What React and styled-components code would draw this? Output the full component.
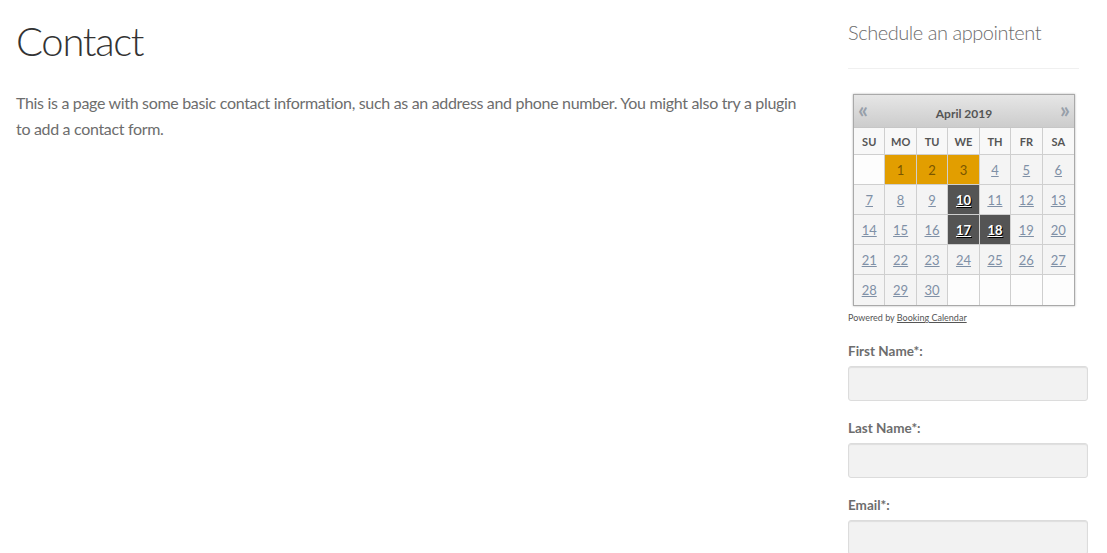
import React from "react";
import styled, { createGlobalStyle } from "styled-components";

const GlobalStyle = createGlobalStyle`
  html, body { margin: 0; padding: 0; background: #ffffff; }
  body { font-family: Lato, "Open Sans", sans-serif; color: #6d6d6d; }
  * { box-sizing: border-box; }
`;

const Page = styled.div`
  display: flex;
  align-items: flex-start;
  padding: 0 19px 0 16px;
  gap: 48px;
`;

const Main = styled.main`
  flex: 0 0 784px;
`;

const Title = styled.h1`
  margin: 17px 0 0;
  font-family: Lato, sans-serif;
  font-weight: 300;
  font-size: 40px;
  letter-spacing: -1.3px;
  line-height: 1.2;
  color: #333333;
`;

const Lead = styled.p`
  margin: 25px 0 0;
  font-size: 16px;
  letter-spacing: -0.32px;
  line-height: 26px;
  color: #6d6d6d;
`;

const Sidebar = styled.aside`
  flex: 0 0 240px;
`;

const WidgetTitle = styled.h3`
  margin: 20px 0 0;
  padding-bottom: 24px;
  border-bottom: 1px solid rgba(0, 0, 0, 0.06);
  font-weight: 300;
  font-size: 20px;
  letter-spacing: -0.45px;
  line-height: 1.2;
  color: #6d6d6d;
  width: 231px;
`;

const Calendar = styled.div`
  margin: 25px 0 0 5px;
  width: 222px;
  border: 1px solid #a9a9a9;
  box-shadow: 0 0 2px #b5b5b5;
  background: #fff;
`;

const CalHeader = styled.div`
  height: 33px;
  display: flex;
  align-items: center;
  justify-content: space-between;
  padding: 0 4px 0 4px;
  background: linear-gradient(#e6e6e6, #cccccc);
  border-bottom: 1px solid #c6c6c6;
`;

const Arrow = styled.span`
  font-size: 22px;
  font-weight: 700;
  line-height: 1;
  color: #97a0aa;
  margin-top: -2px;
`;

const Month = styled.span`
  font-size: 12px;
  font-weight: 700;
  color: #555;
  margin-top: 4px;
`;

const Grid = styled.div`
  display: grid;
  grid-template-columns: repeat(7, 1fr);
`;

const DayName = styled.div`
  height: 27px;
  display: flex;
  align-items: center;
  justify-content: center;
  font-size: 11px;
  font-weight: 700;
  color: #555;
  background: #f8f8f8;
  border-right: 1px solid #cfcfcf;
  border-bottom: 1px solid #cfcfcf;
  &:nth-child(7n) { border-right: none; }
`;

const cellBg = {
  empty: "#fdfdfd",
  normal: "#f4f4f4",
  booked: "#e29e00",
  dark: "#545454",
};

const Cell = styled.div`
  height: 30px;
  display: flex;
  align-items: center;
  justify-content: center;
  font-size: 13px;
  background: ${(p) => cellBg[p.$kind]};
  border-right: 1px solid #cfcfcf;
  border-bottom: 1px solid #cfcfcf;
  &:nth-child(7n) { border-right: none; }
  &:nth-last-child(-n + 7) { border-bottom: none; }
`;

const DayLink = styled.a`
  color: ${(p) => (p.$kind === "dark" ? "#ffffff" : "#7f90a6")};
  text-decoration: underline;
  font-weight: ${(p) => (p.$kind === "dark" ? 700 : 400)};
  text-shadow: ${(p) => (p.$kind === "dark" ? "1px 1px 0 #000" : "none")};
  cursor: pointer;
`;

const BookedNum = styled.span`
  color: #7a5600;
`;

const Powered = styled.div`
  margin-top: 6px;
  font-size: 9px;
  line-height: 12px;
  color: #555;
  a { color: #555; text-decoration: underline; }
`;

const Field = styled.div`
  margin-top: 17px;
  & + & { margin-top: 17px; }
`;

const Label = styled.label`
  display: block;
  font-size: 13.5px;
  font-weight: 700;
  line-height: 20px;
  color: #6d6d6d;
  margin-bottom: 5px;
`;

const Input = styled.input`
  display: block;
  width: 240px;
  height: 35px;
  background: #f2f2f2;
  border: 1px solid #dcdcdc;
  border-radius: 3px;
  box-shadow: inset 0 1px 1px rgba(0, 0, 0, 0.08);
  outline: none;
`;

const days = [];
const booked = [1, 2, 3];
const dark = [10, 17, 18];
for (let i = 0; i < 35; i++) {
  const d = i; // SU first cell empty (April 1, 2019 is Monday)
  if (d < 1 || d > 30) days.push({ d: null, kind: "empty" });
  else if (booked.includes(d)) days.push({ d, kind: "booked" });
  else if (dark.includes(d)) days.push({ d, kind: "dark" });
  else days.push({ d, kind: "normal" });
}

export default function App() {
  return (
    <>
      <GlobalStyle />
      <Page>
        <Main>
          <Title>Contact</Title>
          <Lead>
            This is a page with some basic contact information, such as an address and phone number. You might also try a plugin to add a contact form.
          </Lead>
        </Main>
        <Sidebar>
          <WidgetTitle>Schedule an appointent</WidgetTitle>
          <Calendar>
            <CalHeader>
              <Arrow>«</Arrow>
              <Month>April 2019</Month>
              <Arrow>»</Arrow>
            </CalHeader>
            <Grid>
              {["SU", "MO", "TU", "WE", "TH", "FR", "SA"].map((n) => (
                <DayName key={n}>{n}</DayName>
              ))}
            </Grid>
            <Grid>
              {days.map((c, i) => (
                <Cell key={i} $kind={c.kind}>
                  {c.d && c.kind === "booked" && <BookedNum>{c.d}</BookedNum>}
                  {c.d && c.kind !== "booked" && <DayLink $kind={c.kind}>{c.d}</DayLink>}
                </Cell>
              ))}
            </Grid>
          </Calendar>
          <Powered>
            Powered by <a>Booking Calendar</a>
          </Powered>
          <Field>
            <Label>First Name*:</Label>
            <Input type="text" />
          </Field>
          <Field>
            <Label>Last Name*:</Label>
            <Input type="text" />
          </Field>
          <Field>
            <Label>Email*:</Label>
            <Input type="text" />
          </Field>
        </Sidebar>
      </Page>
    </>
  );
}
